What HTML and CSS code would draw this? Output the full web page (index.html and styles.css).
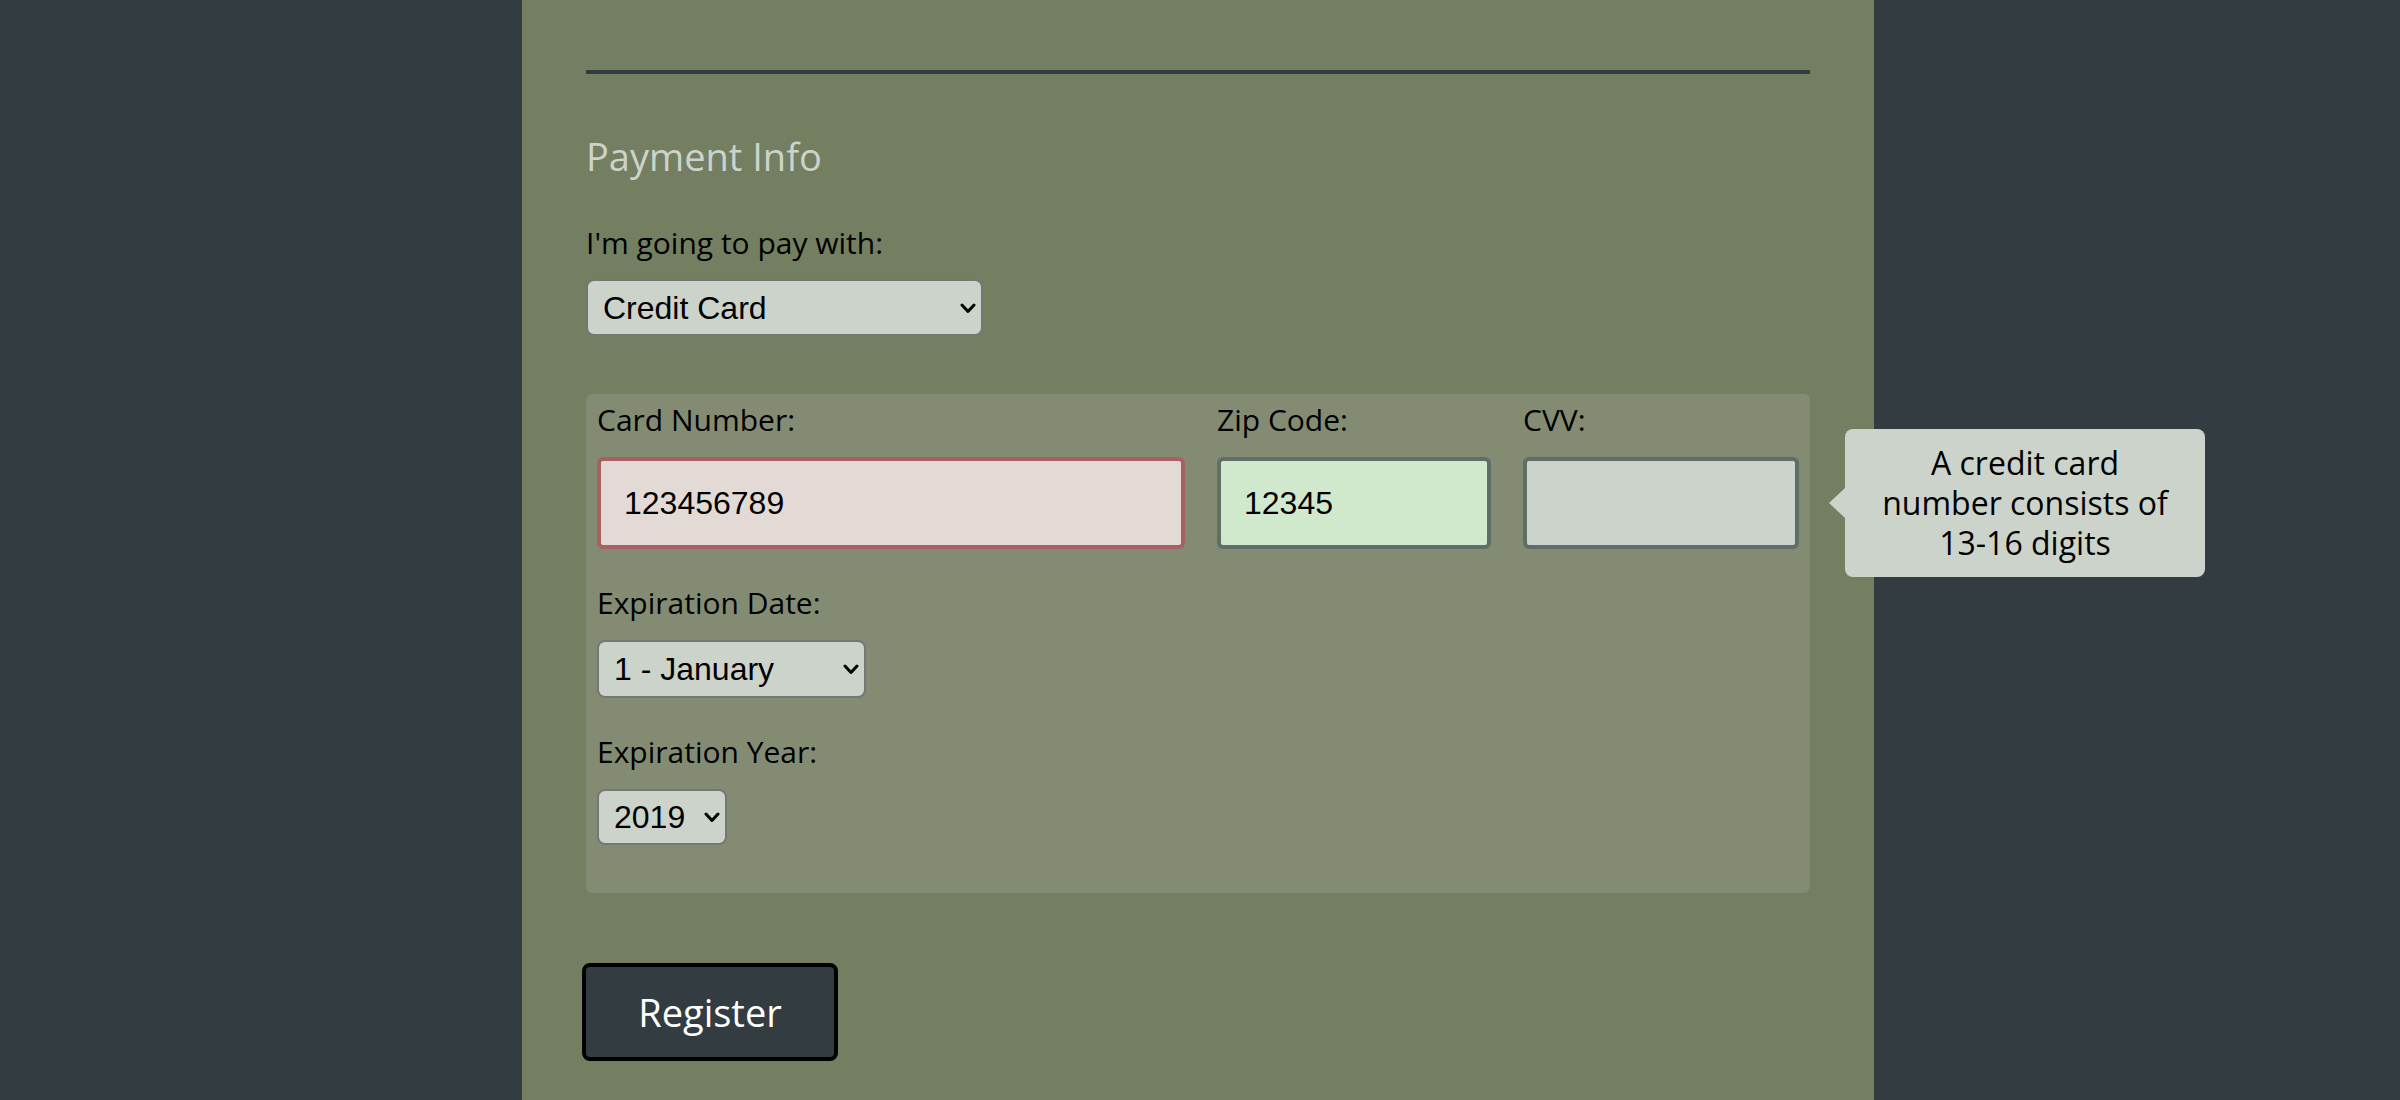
FILE: index.html
```html
<!DOCTYPE html>
<html lang="en">
<head>
<meta charset="utf-8">
<title>Payment Info</title>
<link rel="stylesheet" href="styles.css">
</head>
<body>
<main class="panel">
  <hr class="divider">
  <h2 class="title">Payment Info</h2>
  <div class="field">
    <label class="label" for="payment">I'm going to pay with:</label>
    <span class="select-wrap">
      <select id="payment" class="select select-payment">
        <option>Credit Card</option>
        <option>PayPal</option>
        <option>Bitcoin</option>
      </select>
      <svg class="chev" viewBox="0 0 16 11" width="16" height="11"><polyline points="2,2 8,8.5 14,2"/></svg>
    </span>
  </div>

  <div class="card-box">
    <div class="card-row">
      <div class="field">
        <label class="label" for="cc">Card Number:</label>
        <input id="cc" class="input input-error" type="text" value="123456789">
      </div>
      <div class="field">
        <label class="label" for="zip">Zip Code:</label>
        <input id="zip" class="input input-ok" type="text" value="12345">
      </div>
      <div class="field">
        <label class="label" for="cvv">CVV:</label>
        <span class="cvv-wrap">
          <input id="cvv" class="input" type="text" value="">
          <span class="tooltip"><span class="tooltip-text">A credit card number consists of 13-16 digits</span></span>
        </span>
      </div>
    </div>

    <div class="field">
      <label class="label" for="month">Expiration Date:</label>
      <span class="select-wrap">
        <select id="month" class="select select-month">
          <option>1 - January</option>
          <option>2 - February</option>
        </select>
        <svg class="chev" viewBox="0 0 16 11" width="16" height="11"><polyline points="2,2 8,8.5 14,2"/></svg>
      </span>
    </div>

    <div class="field">
      <label class="label" for="year">Expiration Year:</label>
      <span class="select-wrap">
        <select id="year" class="select select-year">
          <option>2019</option>
          <option>2020</option>
        </select>
        <svg class="chev" viewBox="0 0 16 11" width="16" height="11"><polyline points="2,2 8,8.5 14,2"/></svg>
      </span>
    </div>
  </div>

  <button class="btn" type="submit">Register</button>
</main>
</body>
</html>
```

FILE: styles.css
```css
html, body {
  margin: 0;
  padding: 0;
}
body {
  background: #333d41;
  font-family: "Open Sans", Lato, sans-serif;
  color: #000;
  min-height: 1100px;
}
.panel {
  width: 1352px;
  box-sizing: border-box;
  margin: 0 0 0 calc(50% - 678px);
  padding: 70px 64px 40px;
  background: #747f61;
  min-height: 1100px;
  display: flex;
  flex-direction: column;
  align-items: flex-start;
}
.divider {
  width: 100%;
  height: 4px;
  margin: 0;
  border: 0;
  background: #333d41;
}
.title {
  margin: 59px 0 0;
  font-size: 38px;
  line-height: 46px;
  font-weight: 400;
  color: #cbd3ca;
}
.field {
  display: flex;
  flex-direction: column;
  align-items: flex-start;
  gap: 19px;
}
.panel > .field {
  margin-top: 46px;
  gap: 18px;
}
.label {
  font-size: 30px;
  line-height: 36px;
}
.select-wrap {
  position: relative;
  display: inline-block;
}
.select {
  appearance: none;
  -webkit-appearance: none;
  box-sizing: border-box;
  margin: 0;
  border: 2px solid #767676;
  border-radius: 8px;
  background: #cbd3ca;
  font-family: "Liberation Sans", Arial, sans-serif;
  font-size: 32px;
  color: #000;
  padding: 0 0 0 15px;
  height: 57px;
}
.select-payment { width: 397px; }
.select-month { width: 269px; height: 58px; }
.select-year { width: 130px; height: 56px; }
.chev {
  position: absolute;
  right: 7px;
  top: 50%;
  margin-top: -5px;
  pointer-events: none;
  fill: none;
  stroke: #000;
  stroke-width: 3;
  stroke-linecap: round;
  stroke-linejoin: round;
}
.card-box {
  align-self: stretch;
  margin-top: 58px;
  background: #838c73;
  border-radius: 6px;
  padding: 8px 10px 48px 11px;
  display: flex;
  flex-direction: column;
  align-items: flex-start;
  gap: 36px;
}
.card-row {
  align-self: stretch;
  display: grid;
  grid-template-columns: 588px 274px 276px;
  column-gap: 32px;
}
.card-row .field { align-items: stretch; }
.cvv-wrap {
  position: relative;
  display: block;
}
.input {
  box-sizing: border-box;
  width: 100%;
  height: 92px;
  margin: 0;
  border: 4px solid #5f6f67;
  border-radius: 6px;
  background: #cbd3ca;
  padding: 0 0 0 23px;
  font-family: "Liberation Sans", Arial, sans-serif;
  font-size: 32px;
  color: #000;
  outline: none;
}
.input-error {
  border-color: #a86163;
  background: #e3dad6;
}
.input-ok {
  background: #d0e8cc;
}
.tooltip {
  position: absolute;
  left: calc(100% + 46px);
  top: 50%;
  transform: translateY(-50%);
  width: 360px;
  height: 148px;
  box-sizing: border-box;
  background: #cbd3ca;
  border-radius: 8px;
  display: flex;
  align-items: center;
  justify-content: center;
  text-align: center;
  font-size: 32px;
  line-height: 40px;
  color: #000;
}
.tooltip-text {
  max-width: 310px;
}
.tooltip::before {
  content: "";
  position: absolute;
  left: -16px;
  top: 50%;
  margin-top: -15px;
  border-style: solid;
  border-width: 15px 16px 15px 0;
  border-color: transparent #cbd3ca transparent transparent;
}
.btn {
  margin: 70px 0 0 -4px;
  width: 256px;
  height: 98px;
  box-sizing: border-box;
  border: 4px solid #000;
  border-radius: 8px;
  background: #333d41;
  color: #fff;
  font-family: "Open Sans", Lato, sans-serif;
  font-size: 38px;
  padding: 0;
  cursor: pointer;
}
```
